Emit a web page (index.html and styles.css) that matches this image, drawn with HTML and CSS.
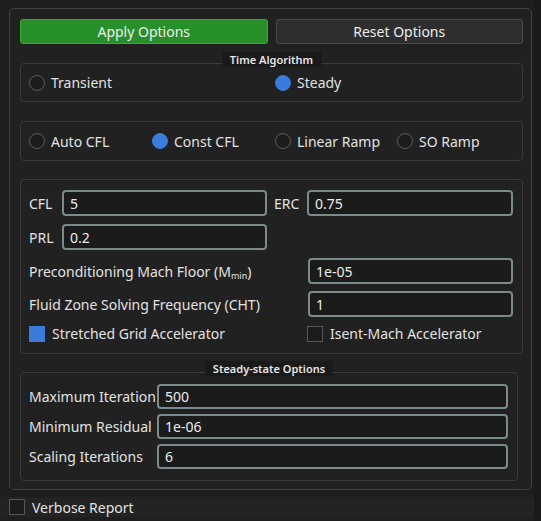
FILE: index.html
```html
<!DOCTYPE html>
<html lang="en">
<head>
    <meta charset="UTF-8">
    <title>Solver Options</title>
    <link rel="stylesheet" href="styles.css">
</head>
<body>
    <div class="main">
        <div class="panel">
            <div class="button-row">
                <button class="btn btn-apply">Apply Options</button>
                <button class="btn btn-reset">Reset Options</button>
            </div>

            <div class="group group-time">
                <span class="group-title">Time Algorithm</span>
                <div class="radio-row two-col">
                    <label class="radio"><span class="dot"></span>Transient</label>
                    <label class="radio"><span class="dot on"></span>Steady</label>
                </div>
            </div>

            <div class="group group-cfl">
                <div class="radio-row four-col">
                    <label class="radio"><span class="dot"></span>Auto CFL</label>
                    <label class="radio"><span class="dot on"></span>Const CFL</label>
                    <label class="radio"><span class="dot"></span>Linear Ramp</label>
                    <label class="radio"><span class="dot"></span>SO Ramp</label>
                </div>
            </div>

            <div class="group group-params">
                <div class="pair-row">
                    <div class="field"><span class="lbl">CFL</span><input class="inp" value="5"></div>
                    <div class="field"><span class="lbl">ERC</span><input class="inp" value="0.75"></div>
                </div>
                <div class="pair-row">
                    <div class="field"><span class="lbl">PRL</span><input class="inp" value="0.2"></div>
                    <div class="field"></div>
                </div>
                <div class="wide-row">
                    <span class="lbl">Preconditioning Mach Floor (M<sub>min</sub>)</span>
                    <input class="inp" value="1e-05">
                </div>
                <div class="wide-row">
                    <span class="lbl">Fluid Zone Solving Frequency (CHT)</span>
                    <input class="inp" value="1">
                </div>
                <div class="check-row">
                    <label class="check"><span class="box on"></span>Stretched Grid Accelerator</label>
                    <label class="check"><span class="box"></span>Isent-Mach Accelerator</label>
                </div>
            </div>

            <div class="group group-steady">
                <span class="group-title">Steady-state Options</span>
                <div class="iter-row"><span class="lbl">Maximum Iteration</span><input class="inp" value="500"></div>
                <div class="iter-row"><span class="lbl">Minimum Residual</span><input class="inp" value="1e-06"></div>
                <div class="iter-row"><span class="lbl">Scaling Iterations</span><input class="inp" value="6"></div>
            </div>
        </div>

        <div class="footer-row">
            <label class="check"><span class="box"></span>Verbose Report</label>
        </div>
    </div>
    <div class="gutter"></div>
</body>
</html>
```

FILE: styles.css
```css
body {
    margin: 0;
    display: flex;
    height: 521px;
    background-color: #1e1e1e;
    font-family: "Noto Sans", "Open Sans", sans-serif;
    font-size: 14px;
    color: #e2e2e2;
    overflow: hidden;
}

.main {
    width: 534px;
}

.gutter {
    flex: 1;
    background-color: #1a1a1a;
}

.panel {
    margin: 8px 0 0 9px;
    width: 523px;
    height: 482px;
    box-sizing: border-box;
    border: 1px solid #3f3f3f;
    border-radius: 5px;
    background-color: #212121;
    padding: 10px 8px 0 10px;
}

.button-row {
    display: flex;
    gap: 8px;
}

.btn {
    flex: 1;
    height: 25px;
    font-family: inherit;
    font-size: 14px;
    color: #ececec;
    border-radius: 3px;
    padding: 0;
}

.btn-apply {
    background-color: #28902a;
    border: 1px solid #3aa83a;
}

.btn-reset {
    background-color: #2e2e2e;
    border: 1px solid #4a4a4a;
}

.group {
    position: relative;
    border: 1px solid #3a3a3a;
    border-radius: 4px;
    box-sizing: border-box;
}

/* title chip sits over the group's top edge */
.group-title {
    position: absolute;
    top: -12px;
    left: 50%;
    transform: translateX(-50%);
    background-color: #1a1a1a;
    padding: 0 8px;
    height: 15px;
    line-height: 15px;
    font-size: 11px;
    font-weight: 600;
    white-space: nowrap;
    color: #e6e6e6;
}

.group-time {
    margin-top: 19px;
    height: 39px;
}

.group-cfl {
    margin-top: 19px;
    height: 40px;
}

.radio-row {
    display: grid;
    height: 100%;
    padding-left: 8px;
    align-items: center;
}

.two-col {
    grid-template-columns: 246px 1fr;
}

.four-col {
    grid-template-columns: 123px 123px 122px 1fr;
}

.radio {
    display: flex;
    align-items: center;
    gap: 6px;
}

.dot {
    width: 14px;
    height: 14px;
    border: 1px solid #5c5c5c;
    border-radius: 50%;
    background-color: #1c1c1c;
}

.dot.on {
    background-color: #3a7bdc;
    border-color: #3a7bdc;
}

.group-params {
    margin-top: 18px;
    height: 175px;
    padding: 10px 9px 0 8px;
}

.pair-row {
    display: grid;
    grid-template-columns: 238px 1fr;
    gap: 7px;
    height: 26px;
    margin-bottom: 8px;
}

.field {
    display: flex;
    align-items: center;
    min-width: 0;
}

.field .lbl {
    width: 33px;
    flex: none;
}

.inp {
    flex: 1;
    width: 0;
    min-width: 0;
    height: 26px;
    box-sizing: border-box;
    background-color: #1b1b1b;
    border: 2px solid #7b8a8a;
    border-radius: 4px;
    color: #ececec;
    font-family: inherit;
    font-size: 14px;
    padding: 0 6px;
    outline: none;
}

.wide-row {
    display: flex;
    align-items: center;
    height: 26px;
    margin-bottom: 7px;
}

.wide-row .lbl {
    width: 279px;
    flex: none;
}

.lbl sub {
    font-size: 9px;
    vertical-align: -2px;
    line-height: 0;
}

.check-row {
    display: grid;
    grid-template-columns: 278px 1fr;
    height: 16px;
    margin-top: 2px;
}

.check {
    display: flex;
    align-items: center;
    gap: 7px;
}

.box {
    width: 14px;
    height: 14px;
    border: 1px solid #555;
    background-color: #1c1c1c;
}

.box.on {
    background-color: #3a7bdc;
    border-color: #3a7bdc;
}

.group-steady {
    margin-top: 18px;
    margin-right: 5px;
    height: 109px;
    padding: 11px 9px 0 8px;
}

.iter-row {
    display: flex;
    align-items: center;
    height: 25px;
    margin-bottom: 6px;
}

.iter-row + .iter-row {
    margin-top: -1px;
}

.iter-row .lbl {
    width: 128px;
    flex: none;
}

.iter-row .inp {
    height: 25px;
}

.footer-row {
    margin-top: 7px;
    height: 20px;
    background-color: #232323;
    padding-left: 9px;
    display: flex;
    align-items: center;
}
```
